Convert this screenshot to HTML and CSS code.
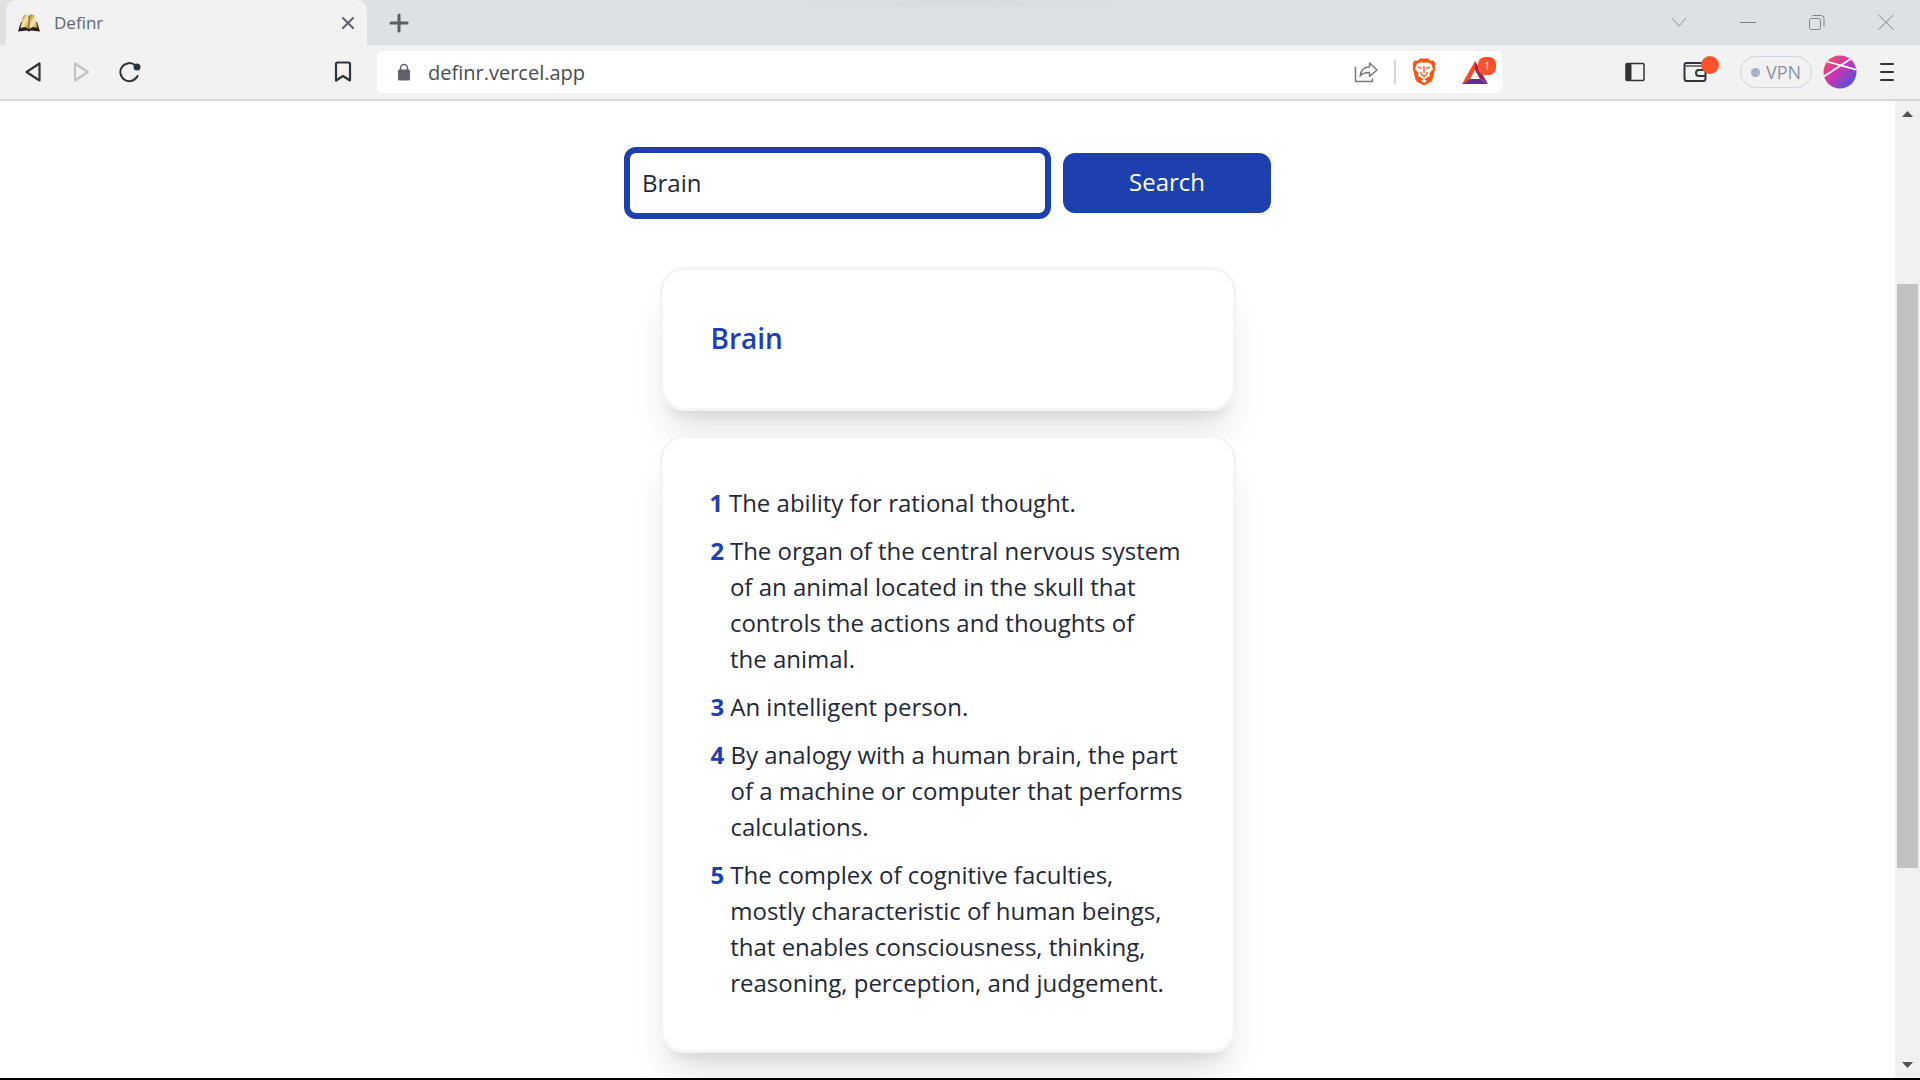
FILE: index.html
```html
<!DOCTYPE html>
<html lang="en">
<head>
<meta charset="utf-8">
<title>Definr</title>
<link rel="stylesheet" href="styles.css">
</head>
<body>
<div class="browser">
  <header class="chrome">
    <div class="tabstrip">
      <div class="tab">
        <svg class="favicon" width="22" height="20" viewBox="0 0 22 20"><defs><linearGradient id="leaf" x1="0" y1="0" x2="1" y2="1"><stop offset="0" stop-color="#8f6a1d"/><stop offset=".5" stop-color="#fbe9ad"/><stop offset="1" stop-color="#b08530"/></linearGradient></defs><path d="M3 9L0 18.500l9-1 2 1 2-1 9 1L19 9z" fill="#252019"/><path d="M5 3c3-2 5-2 6 0v13c-3-2-5-2-8.500-1z" fill="url(#leaf)"/><path d="M17 3c-3-2-5-2-6 0v13c3-2 5-2 8.500-1z" fill="url(#leaf)"/><path d="M11 3v13" stroke="#80601f"/></svg>
        <span class="tab-title">Definr</span>
        <button class="icon-btn" aria-label="Close tab"><svg width="14" height="14" viewBox="0 0 14 14"><path d="M2 2l10 10M12 2L2 12" stroke="#5f6368" stroke-width="2" stroke-linecap="round"/></svg></button>
      </div>
      <button class="icon-btn new-tab" aria-label="New tab"><svg width="20" height="20" viewBox="0 0 20 20"><path d="M10 2v16M2 10h16" stroke="#5b5f63" stroke-width="3" stroke-linecap="round"/></svg></button>
      <div class="window-buttons">
        <button class="icon-btn" aria-label="Search tabs"><svg width="16" height="16" viewBox="0 0 16 16"><path d="M1 4l7 8 7-8" fill="none" stroke="#909498" stroke-width="1"/></svg></button>
        <button class="icon-btn" aria-label="Minimize"><svg width="16" height="16" viewBox="0 0 16 16"><path d="M0 8.500h16" stroke="#808488"/></svg></button>
        <button class="icon-btn" aria-label="Restore"><svg width="16" height="16" viewBox="0 0 16 16" fill="none" stroke="#808488"><rect x=".5" y="4.500" width="11" height="11" rx="2"/><path d="M3.500 1.500h8.500q3 0 3 3v8"/></svg></button>
        <button class="icon-btn" aria-label="Close window"><svg width="16" height="16" viewBox="0 0 16 16"><path d="M.5 1l15 14.500M15.500 1L.5 15.500" stroke="#808488"/></svg></button>
      </div>
    </div>
    <div class="toolbar">
      <nav class="nav-buttons">
        <button class="icon-btn" aria-label="Back"><svg width="22" height="22" viewBox="0 0 22 22"><path d="M16.500 2.500v17L3.500 11z" fill="none" stroke="#303437" stroke-width="2.200" stroke-linejoin="round"/></svg></button>
        <button class="icon-btn" aria-label="Forward" disabled><svg width="22" height="22" viewBox="0 0 22 22"><path d="M4 2.500v17L17 11z" fill="none" stroke="#c0c1c2" stroke-width="2.200" stroke-linejoin="round"/></svg></button>
        <button class="icon-btn" aria-label="Reload"><svg width="22" height="22" viewBox="0 0 22 22"><path d="M18.500 15a9 9 0 1 1-2-10.500" fill="none" stroke="#303437" stroke-width="2" stroke-linecap="round"/><circle cx="18" cy="6" r="3.500" fill="#303437"/></svg></button>
      </nav>
      <button class="icon-btn bookmark" aria-label="Bookmark"><svg width="18" height="22" viewBox="0 0 18 22"><path d="M2 3q0-1.500 1.500-1.500h11q1.500 0 1.500 1.500v16.500l-7-4.500-7 4.500z" fill="none" stroke="#303437" stroke-width="2.200" stroke-linejoin="round"/></svg></button>
      <div class="address">
        <svg class="lock" width="14" height="18" viewBox="0 0 14 18"><path d="M3.500 8V5a3.500 3.500 0 0 1 7 0v3" fill="none" stroke="#5f6368" stroke-width="1.500"/><rect x="1" y="6.500" width="12" height="11" rx="1.500" fill="#5f6368"/></svg>
        <input class="url" type="text" value="definr.vercel.app" aria-label="Address">
        <div class="address-tools">
          <button class="icon-btn" aria-label="Share"><svg width="24" height="22" viewBox="0 0 24 22" fill="none" stroke="#77797b" stroke-width="1.500"><path d="M1.500 6v14.500h17v-3"/><path d="M6 15C7 8.500 10 6 15.500 6V2L23 9l-7.500 6.500V11.500C11 11.500 8 12.500 6 15z" stroke-linejoin="round"/></svg></button>
          <span class="divider"></span>
          <button class="icon-btn" aria-label="Brave Shields"><svg width="24" height="28" viewBox="0 0 24 28"><path d="M8 .5h8l2.500 2.300 3-.3 2 3.500-.7 2 .5 2-2.700 11q-.5 2-2 3L12 27.500 5.400 24q-1.500-1-2-3L.7 10l.5-2-.7-2 2-3.500 3 .3z" fill="#fb5413"/><path d="M12 5l3-.8 4 1.300 2 5.500-3.500 4 .5 3-3 1.500L13 21l-1 .7-1-.7-2-1.500L6 18l.5-3L3 11l2-5.500 4-1.300z" fill="#fff"/><path d="M12 8v7M6 9l4 1.500M18 9l-4 1.500M8.500 14l1.500 3 2 .8 2-.8 1.500-3M12 17.500V20" fill="none" stroke="#fb5413" stroke-width="1.300"/><path d="M9 23l3-1.800 3 1.800-3 2z" fill="#fff"/></svg></button>
          <button class="icon-btn rewards" aria-label="Brave Rewards"><svg width="28" height="25" viewBox="0 0 28 25"><path d="M14 1L1 24l8-5 5-9z" fill="#ff4724"/><path d="M14 1l13 23-8-5-5-9z" fill="#9e1f63"/><path d="M1 24h26l-8-5H9z" fill="#662d91"/></svg><span class="badge">1</span></button>
        </div>
      </div>
      <div class="right-tools">
        <button class="icon-btn" aria-label="Sidebar"><svg width="20" height="20" viewBox="0 0 20 20"><rect x="1" y="1.500" width="18" height="17" rx="1" fill="none" stroke="#303437" stroke-width="1.500"/><path d="M1 1.500h5.500v17H1z" fill="#303437"/></svg></button>
        <button class="icon-btn wallet" aria-label="Wallet"><svg width="24" height="22" viewBox="0 0 24 22" fill="none" stroke="#303437" stroke-width="2"><path d="M1.500 4v13.500q0 2.500 2.500 2.500h16q2.500 0 2.500-2.500V4q0-2-2-2H3.500q-2 0-2 2z"/><path d="M2 5h20" stroke="#77797b"/><path d="M22 9h-6a3 3 0 0 0 0 6h6"/></svg><span class="dot"></span></button>
        <button class="vpn"><span class="vpn-dot"></span>VPN</button>
        <button class="icon-btn" aria-label="Profile"><svg width="34" height="34" viewBox="0 0 34 34"><defs><linearGradient id="orb" x1=".1" y1=".1" x2=".9" y2=".9"><stop offset="0" stop-color="#f0506a"/><stop offset=".45" stop-color="#c936b0"/><stop offset="1" stop-color="#4856df"/></linearGradient><clipPath id="disc"><circle cx="17" cy="17" r="16.500"/></clipPath></defs><g clip-path="url(#disc)"><path d="M0 0h34v34H0z" fill="url(#orb)"/><path d="M2 6l32 9M0 22L29 3" stroke="#fff" stroke-width="1.800"/></g></svg></button>
        <button class="icon-btn" aria-label="Menu"><svg width="16" height="20" viewBox="0 0 16 20"><path d="M2 2h12M2 10h12M2 18h12" stroke="#303437" stroke-width="2" stroke-linecap="round"/></svg></button>
      </div>
    </div>
  </header>
  <div class="viewport">
    <main class="page">
      <form class="search">
        <input class="search-input" type="text" value="Brain" aria-label="Word">
        <button class="search-btn" type="button">Search</button>
      </form>
      <section class="card">
        <h1 class="word">Brain</h1>
      </section>
      <section class="card">
        <ol class="meanings">
          <li class="meaning"><span class="num">1</span><p class="text">The ability for rational thought.</p></li>
          <li class="meaning"><span class="num">2</span><p class="text">The organ of the central nervous system<br>of an animal located in the skull that<br>controls the actions and thoughts of<br>the animal.</p></li>
          <li class="meaning"><span class="num">3</span><p class="text">An intelligent person.</p></li>
          <li class="meaning"><span class="num">4</span><p class="text">By analogy with a human brain, the part<br>of a machine or computer that performs<br>calculations.</p></li>
          <li class="meaning"><span class="num">5</span><p class="text">The complex of cognitive faculties,<br>mostly characteristic of human beings,<br>that enables consciousness, thinking,<br>reasoning, perception, and judgement.</p></li>
        </ol>
      </section>
    </main>
    <div class="scrollbar">
      <svg width="11" height="6" viewBox="0 0 11 6"><path d="M0 6h11L5.500 0z" fill="#505050"/></svg>
      <div class="track"><div class="thumb"></div></div>
      <svg width="11" height="6" viewBox="0 0 11 6"><path d="M0 0h11L5.500 6z" fill="#505050"/></svg>
    </div>
  </div>
</div>
</body>
</html>
```
FILE: styles.css
```css
* { box-sizing: border-box; }

body {
  margin: 0;
  background: #fff;
  font-family: "Open Sans", "Noto Sans", sans-serif;
}

button, input { font: inherit; }

svg { display: block; flex: none; }

.browser {
  display: flex;
  flex-direction: column;
  height: 100vh;
  border-bottom: 2px solid #000;
}

.icon-btn {
  display: flex;
  position: relative;
  padding: 0;
  border: 0;
  background: none;
}

.tabstrip {
  display: flex;
  align-items: center;
  height: 45px;
  padding-left: 6px;
  background: radial-gradient(ellipse 190px 10px at 50% 0, #d6dadd, #dde1e4);
}

.tab {
  display: flex;
  align-items: center;
  align-self: stretch;
  width: 361px;
  padding: 0 12px;
  border-radius: 10px 10px 0 0;
  background: #f2f2f2;
}

.tab-title {
  flex: 1;
  margin-left: 14px;
  font-size: 17px;
  line-height: 24px;
  color: #63676b;
}

.new-tab { margin-left: 22px; }

.window-buttons {
  display: flex;
  gap: 53px;
  margin-left: auto;
  padding: 0 26px 2px 0;
}

.toolbar {
  display: flex;
  align-items: center;
  height: 56px;
  border-bottom: 2px solid #d2d6d9;
  background: #f2f2f2;
}

.nav-buttons {
  display: flex;
  gap: 26px;
  width: 334px;
  padding-left: 23px;
}

.bookmark { margin-right: 25px; }

.address {
  display: flex;
  flex: 1;
  align-items: center;
  height: 42px;
  padding: 0 6px 0 20px;
  border-radius: 6px;
  background: #fff;
}

.url {
  flex: 1;
  min-width: 0;
  margin-left: 17px;
  padding: 0;
  border: 0;
  outline: 0;
  background: none;
  font-size: 20px;
  color: #484c50;
}

.address-tools {
  display: flex;
  align-items: center;
}

.divider {
  width: 2px;
  height: 24px;
  margin: 0 16px;
  background: #d5d6d8;
}

.rewards { margin: 0 7px 0 25px; }

.badge {
  position: absolute;
  top: -3px;
  right: -7px;
  width: 18px;
  height: 18px;
  border-radius: 7px;
  background: #fb542b;
  font-size: 10px;
  line-height: 18px;
  text-align: center;
  color: #fff;
}

.right-tools {
  display: flex;
  align-items: center;
  width: 418px;
  padding: 0 25px 0 123px;
}

.wallet { margin-left: 38px; }

.dot {
  position: absolute;
  top: -5px;
  right: -12px;
  width: 18px;
  height: 18px;
  border-radius: 9px;
  background: #fb542b;
}

.vpn {
  display: flex;
  align-items: center;
  justify-content: center;
  gap: 6px;
  width: 72px;
  height: 32px;
  margin: 0 11px 0 33px;
  padding: 0;
  border: 1px solid #cdd2d6;
  border-radius: 16px;
  background: none;
  font-size: 18px;
  color: #8996a2;
}

.vpn-dot {
  width: 9px;
  height: 9px;
  border-radius: 50%;
  background: #aab0c4;
}

.right-tools > :last-child { margin-left: auto; }

.viewport {
  display: flex;
  flex: 1;
  min-height: 0;
}

.page {
  display: flex;
  flex: 1;
  flex-direction: column;
  align-items: center;
  overflow: hidden;
  padding-top: 46px;
  font-size: 24px;
  line-height: 36px;
  color: #1f2937;
}

.search {
  display: flex;
  align-items: center;
  gap: 12px;
  margin-bottom: 48px;
}

.search-input {
  width: 427px;
  height: 72px;
  padding: 0 12px 2px;
  border: 6px solid #1e40af;
  border-radius: 12px;
  outline: 0;
  background: #fff;
  color: #1f2937;
}

.search-btn {
  width: 208px;
  height: 60px;
  padding: 0 0 2px;
  border: 0;
  border-radius: 12px;
  background: #1e40af;
  font-weight: 500;
  color: #fff;
}

.card {
  flex: none;
  width: 576px;
  margin-bottom: 24px;
  padding: 47px 48px 49px;
  border: 3px solid #f3f4f6;
  border-radius: 24px;
  background: #fff;
  box-shadow: 0 30px 38px -8px rgba(0, 0, 0, .1), 0 12px 15px -9px rgba(0, 0, 0, .1);
}

.word {
  margin: 0;
  font-size: 28px;
  line-height: 42px;
  font-weight: 600;
  color: #1e40af;
}

.meanings {
  display: flex;
  flex-direction: column;
  gap: 12px;
  margin: 0;
  padding: 0;
  list-style: none;
}

.meaning {
  display: flex;
  gap: 6px;
}

.num {
  font-weight: 700;
  font-variant-numeric: proportional-nums;
  color: #1e40af;
}

.text {
  margin: 0;
  white-space: nowrap;
}

.scrollbar {
  display: flex;
  flex: none;
  flex-direction: column;
  align-items: center;
  width: 25px;
  padding: 10px 0;
  background: #f0f0f0;
}

.track {
  flex: 1;
  width: 21px;
  padding-top: 167px;
}

.thumb {
  height: 75%;
  background: #c1c1c1;
}
```
